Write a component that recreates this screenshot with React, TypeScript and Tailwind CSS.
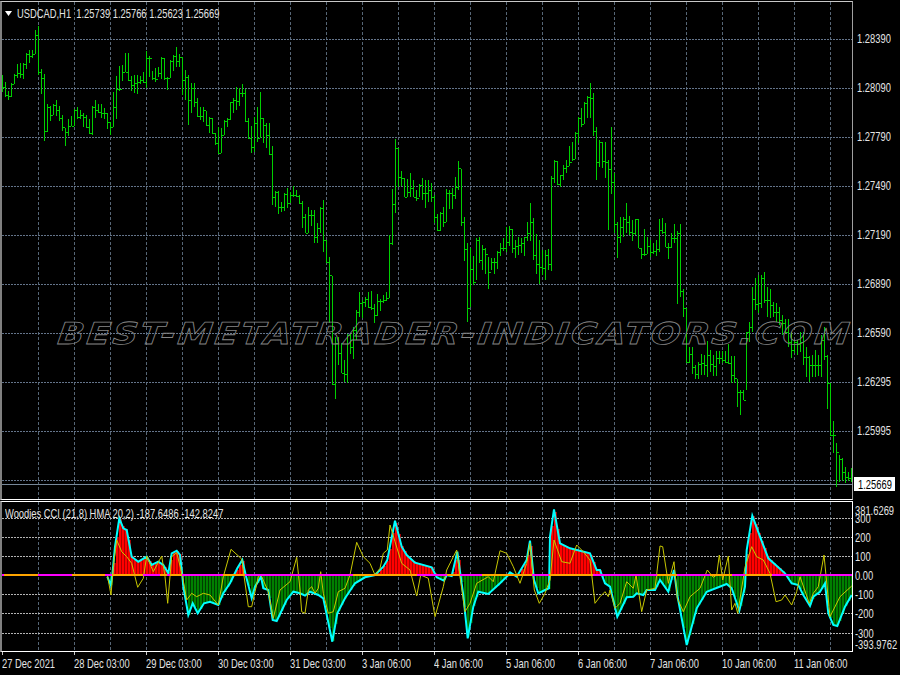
import React from 'react'

// [high, low, close] of each H1 bar as screen rows, one bar every 3px
const bars: number[][] = [
  [75,92,87],[82,97,95],[91,100,96],[83,97,84],[74,84,75],[64,78,73],[63,78,74],[63,79,64],[53,69,54],[50,63,56],
  [50,58,54],[30,54,35],[26,75,72],[69,94,78],[74,141,131],[104,132,107],[106,121,115],[104,115,105],[100,116,110],[106,121,118],
  [115,131,127],[128,146,132],[119,136,126],[116,126,126],[109,126,110],[107,119,117],[110,119,115],[113,127,117],[115,128,127],[119,134,133],
  [106,135,107],[100,118,110],[104,113,112],[104,118,113],[108,119,113],[113,129,122],[122,135,127],[92,127,107],[76,119,89],[66,91,89],
  [65,81,72],[53,72,72],[53,81,80],[76,91,85],[75,93,83],[75,94,82],[76,84,80],[72,83,82],[51,88,58],[56,77,58],
  [71,80,78],[68,82,79],[67,77,73],[57,79,58],[58,80,78],[77,90,78],[60,78,61],[55,71,56],[47,67,61],[54,67,57],
  [57,95,80],[70,100,77],[75,125,100],[83,113,88],[83,107,102],[98,117,116],[107,120,116],[107,122,110],[111,126,125],[117,133,118],
  [118,134,133],[133,145,143],[127,154,153],[128,153,135],[120,135,121],[118,127,119],[102,120,102],[98,113,100],[87,110,101],[88,106,93],
  [84,97,93],[89,122,121],[118,139,138],[126,153,147],[117,152,123],[107,142,138],[92,138,118],[118,143,125],[123,148,135],[123,155,154],
  [146,205,197],[191,207,192],[191,214,207],[202,212,207],[193,211,194],[188,208,203],[192,203,195],[186,197,195],[190,197,196],[195,204,203],
  [201,228,217],[214,233,233],[207,233,215],[210,226,215],[210,243,237],[223,243,228],[207,233,208],[200,252,240],[240,263,262],[257,323,275],
  [276,385,384],[337,399,343],[337,365,353],[343,373,373],[360,382,374],[334,383,335],[334,354,347],[327,359,330],[310,340,312],[292,317,303],
  [300,318,302],[297,307,299],[292,308,307],[291,310,308],[304,323,315],[294,316,301],[299,311,301],[295,303,300],[292,301,298],[235,298,243],
  [189,245,204],[139,213,148],[148,187,177],[171,186,178],[178,197,197],[179,197,192],[173,197,188],[180,197,197],[190,201,198],[184,197,185],
  [178,200,193],[180,208,193],[180,202,190],[183,202,197],[195,223,217],[214,231,230],[212,231,213],[207,227,222],[189,222,193],[190,209,193],
  [188,209,195],[177,199,187],[161,190,168],[169,226,222],[217,261,249],[243,322,308],[248,307,269],[256,285,282],[238,280,240],[237,263,260],
  [245,270,249],[248,274,254],[257,289,272],[258,270,262],[258,274,262],[251,269,252],[243,256,248],[238,251,248],[227,252,242],[226,246,229],
  [229,253,248],[240,258,246],[237,255,245],[238,253,243],[237,256,237],[222,241,233],[203,241,222],[218,260,255],[234,274,264],[240,284,267],
  [250,275,268],[250,280,255],[249,270,264],[176,271,178],[160,183,161],[161,185,184],[175,187,175],[165,180,168],[160,173,166],[146,166,162],
  [142,161,159],[132,159,133],[117,143,118],[108,127,124],[102,124,103],[96,118,97],[83,118,98],[93,136,131],[127,180,162],[140,167,142],
  [142,168,161],[142,178,162],[160,230,169],[127,194,182],[173,233,224],[222,258,237],[217,243,227],[217,237,219],[203,233,222],[216,235,232],
  [220,241,233],[219,235,219],[219,248,248],[248,259,254],[229,256,254],[237,254,246],[240,257,252],[243,254,251],[240,256,249],[219,252,230],
  [218,234,232],[223,247,247],[243,259,247],[233,248,238],[224,243,238],[231,304,233],[224,297,291],[289,317,308],[308,363,362],[347,363,354],
  [347,374,367],[365,379,374],[362,379,364],[354,375,363],[355,375,365],[341,377,355],[350,372,364],[355,376,366],[351,376,358],[351,364,358],
  [351,363,360],[351,363,362],[344,364,363],[356,383,375],[356,383,378],[379,407,392],[390,415,392],[390,400,400],[332,390,332],[322,342,327],
  [287,332,299],[278,310,304],[275,313,303],[275,308,278],[272,303,300],[287,317,300],[289,318,305],[302,317,312],[303,322,312],[307,325,320],
  [315,335,323],[319,333,332],[319,347,342],[332,358,350],[340,353,342],[340,355,344],[332,352,342],[332,365,357],[347,377,357],[356,382,365],
  [355,377,365],[350,377,365],[355,376,365],[335,377,340],[327,360,356],[355,409,383],[383,436,435],[421,453,435],[443,487,452],[455,482,459],
  [458,481,472],[467,483,477],[472,481,478],[468,482,479],
]

const barPath = bars
  .map((b, i) => {
    const col = 2 + 3 * i
    const open = i === 0 ? b[2] : bars[i - 1][2]
    return `M${col} ${b[0]}h1v${b[1] - b[0]}h-1zM${col + 1} ${b[2]}h1v1h-1zM${col - 1} ${open}h1v1h-1z`
  })
  .join('')

// traced from the sub-window, [x, y] in 3x crop units per block
const trace = (base: number, p: number[]) => {
  const out: number[][] = []
  for (let i = 0; i < p.length; i += 2) out.push([base + p[i] / 3, 480 + p[i + 1] / 3])
  return out
}

const cci = [
  ...trace(0, [322,290,332,315,337,285,345,200,358,115,370,145,380,150,395,230,415,245,440,230,455,255,475,245,490,255,505,280,515,220,530,212,540,225,547,285,550,320,565,405,578,370,593,400,612,370,630,365,655,375,670,340,690,310,712,265,727,240,737,285,755,355,765,320,783,290,790,325,805,330,818,420,830,423,860,360,880,335]),
  ...trace(300, [0,340,15,347,30,335,55,345,70,355,97,485,112,400,135,355,165,310,195,292,225,285,250,260,262,240,285,122,305,200,320,225,345,248,395,262,410,292,432,302,440,285,455,288,472,215,482,290,490,345,503,475,520,380,535,335,565,342,600,310,620,290,630,277,650,290,680,240,690,182,702,300,715,340,735,330,747,325,750,170,762,88,780,190,810,205,870,220,890,270]),
  ...trace(600, [0,270,15,310,30,320,52,410,80,352,100,350,110,340,130,345,140,330,165,330,180,300,205,335,222,270,232,345,260,495,290,385,320,335,380,312,395,325,418,392,435,320,440,210,457,107,480,170,505,235,555,280,575,310,595,315,610,345,630,378,640,350,660,335,675,310,685,400,700,435,712,438,735,380,755,345]),
]

const hma = [
  ...trace(0, [322,285,333,345,340,260,350,180,365,215,380,230,395,250,405,290,413,322,430,295,440,228,460,275,485,228,495,290,503,370,515,230,530,218,547,285,560,360,575,340,590,350,610,340,630,345,655,375,670,290,693,208,725,237,745,380,755,380,775,290,783,285,805,335,820,415,840,330,870,305,890,232]),
  ...trace(300, [0,330,5,395,15,400,25,330,35,320,45,340,55,325,62,275,70,340,85,400,100,395,115,335,135,325,150,285,170,187,190,230,210,250,225,285,240,265,250,220,262,210,270,135,285,185,305,250,330,270,350,348,362,285,385,295,405,410,430,320,440,270,470,210,480,290,495,395,510,370,530,310,565,290,580,305,600,212,620,220,640,260,660,310,680,250,690,190,703,330,718,370,735,340,750,300,762,180,785,245,810,250,830,195,850,215,870,240,885,370]),
  ...trace(600, [0,350,15,335,25,350,30,330,45,385,60,370,80,305,100,325,108,285,125,395,140,330,165,325,180,198,188,200,205,310,222,245,232,355,250,395,270,350,300,325,322,270,340,292,350,285,358,225,368,300,385,228,395,390,405,370,413,400,435,262,455,200,470,230,490,240,510,280,528,365,545,360,555,345,575,375,590,335,600,290,628,370,640,340,655,320,672,225,690,410,720,350,755,318]),
]

const poly = (p: number[][]) => p.map((q) => `${q[0].toFixed(1)},${q[1].toFixed(1)}`).join(' ')
const zero = 575

const cciAt = (x: number) => {
  for (let i = 1; i < cci.length; i++) {
    if (x <= cci[i][0]) {
      const [x0, y0] = cci[i - 1]
      const [x1, y1] = cci[i]
      return y0 + ((y1 - y0) * (x - x0)) / Math.max(x1 - x0, 0.01)
    }
  }
  return zero
}

const histogram = bars.map((_, i) => 2 + 3 * i).filter((x) => x >= 108)

// colour runs of the zero line
const zeroRuns: [number, number, string][] = [
  [2, 4, '#ff00ff'],[4, 38, '#ffa500'],[38, 72, '#ff00ff'],[72, 105, '#ffa500'],[105, 112, '#ff00ff'],[112, 143, '#ffa500'],
  [143, 160, '#ff00ff'],[160, 167, '#ffa500'],[167, 170, '#ff00ff'],[170, 182, '#ffa500'],[182, 223, '#ff00ff'],[223, 245, '#ffa500'],
  [245, 353, '#ff00ff'],[353, 417, '#ffa500'],[417, 447, '#ff00ff'],[447, 460, '#ffa500'],[460, 482, '#ff00ff'],[482, 532, '#ffa500'],
  [532, 549, '#ff00ff'],[549, 593, '#ffa500'],[593, 657, '#ff00ff'],[657, 677, '#ffa500'],[677, 710, '#ff00ff'],[710, 732, '#ffa500'],
  [732, 745, '#ff00ff'],[745, 772, '#ffa500'],[772, 852, '#ff00ff'],
]

const gridX = Array.from({ length: 23 }, (_, i) => 38 + 36 * i)
const gridY = [39, 88, 137, 186, 235, 284, 333, 382, 431, 480]
const levelY = [518, 537, 556, 594, 613, 633]

const prices = ['1.28390', '1.28090', '1.27790', '1.27490', '1.27190', '1.26890', '1.26590', '1.26295', '1.25995']
const levels: [string, string][] = [
  ['381.6269', 'h-[10px]'],['300', '-mt-[6px] h-[19px]'],['200', 'h-[19px]'],['100', 'h-[19px]'],['0.00', 'h-[19px]'],
  ['-100', 'h-[19px]'],['-200', 'h-[19px]'],['-300', 'h-[20px]'],['-393.9762', '-mt-[4px] h-[11px]'],
]
const dates = ['27 Dec 2021', '28 Dec 03:00', '29 Dec 03:00', '30 Dec 03:00', '31 Dec 03:00', '3 Jan 06:00', '4 Jan 06:00', '5 Jan 06:00', '6 Jan 06:00', '7 Jan 06:00', '10 Jan 06:00', '11 Jan 06:00']

// the terminal font is narrower than Arial
const narrow = 'origin-left scale-x-[.72] whitespace-nowrap'

const GridV = ({ y1, y2 }: { y1: number; y2: number }) => (
  <>
    {gridX.map((x) => (
      <line key={x} x1={x + 0.5} x2={x + 0.5} y1={y1} y2={y2} stroke="#566676" strokeDasharray="3 2" />
    ))}
  </>
)

const App: React.FC = () => {
  return (
    <div className="relative flex h-[675px] w-[900px] flex-col overflow-hidden bg-black pt-px font-['Liberation_Sans',sans-serif] text-[13px] leading-none text-[#e4e4e4]">
      <div className="flex h-[499px]">
        <div className="relative h-[499px] w-[853px] border-t border-r border-b border-l-2 border-t-[#c8c8c8] border-r-[#a0a0a0] border-b-white border-l-[#808080]">
          <svg viewBox="2 2 850 497" width={850} height={497} className="block" shapeRendering="crispEdges">
            <GridV y1={2} y2={499} />
            {gridY.map((y) => (
              <line key={y} x1={2} x2={852} y1={y + 0.5} y2={y + 0.5} stroke="#64748a" strokeDasharray="2 1" />
            ))}
            <rect x={2} y={484} width={850} height={1} fill="#778899" />
            <path d={barPath} fill="#00d000" />
          </svg>
          <div className="absolute top-[5px] left-[3px] flex items-center gap-[5px]">
            <svg width={7} height={5} viewBox="0 0 7 5" className="block">
              <path d="M0 0h7L3.5 5z" fill="#fff" />
            </svg>
            <span className={narrow}>USDCAD,H1&nbsp; 1.25739 1.25766 1.25623 1.25669</span>
          </div>
          <div className="absolute top-[317px] left-[56px] origin-left -skew-x-6 scale-x-[1.16] whitespace-nowrap font-['DejaVu_Sans',sans-serif] text-[30px] font-bold italic tracking-[2px] text-transparent [-webkit-text-stroke:0.8px_#858585]">
            BEST-METATRADER-INDICATORS.COM
          </div>
        </div>
        <div className="flex flex-col pt-[13px] pl-[4px]">
          {prices.map((p) => (
            <div key={p} className="flex h-[49px] items-center">
              <span className={narrow}>{p}</span>
            </div>
          ))}
          <div className="mt-[22px] -ml-[3px] flex h-[14px] w-[41px] items-center bg-white pl-[4px] text-black">
            <span className={narrow}>1.25669</span>
          </div>
        </div>
      </div>
      <div className="mt-px flex h-[151px]">
        <div className="relative h-[151px] w-[853px] border-t border-r border-b border-l-2 border-t-white border-r-white border-b-white border-l-[#808080]">
          <svg viewBox="2 502 850 149" width={850} height={149} className="block">
            <g shapeRendering="crispEdges">
              <GridV y1={502} y2={651} />
              {levelY.map((y) => (
                <line key={y} x1={2} x2={852} y1={y + 0.5} y2={y + 0.5} stroke="#b4b4b4" strokeDasharray="2 1" />
              ))}
              {histogram.map((x) => {
                const y = cciAt(x + 0.5)
                const up = y < zero
                return (
                  <g key={x}>
                    <rect x={x} y={Math.min(y, zero)} width={3} height={Math.abs(y - zero)} fill={up ? '#a80000' : '#003c00'} />
                    <rect x={x} y={Math.min(y, zero)} width={2} height={Math.abs(y - zero)} fill={up ? '#ff0000' : '#008000'} />
                  </g>
                )
              })}
            </g>
            <polyline points={poly(cci)} fill="none" stroke="#00ffff" strokeWidth={2} />
            <polyline points={poly(hma)} fill="none" stroke="#c8c800" strokeWidth={1} />
            <g shapeRendering="crispEdges">
              {zeroRuns.map(([a, b, c]) => (
                <rect key={a} x={a} y={574} width={b - a} height={2} fill={c} />
              ))}
            </g>
          </svg>
          <div className={`absolute top-[5px] left-[3px] ${narrow}`}>Woodies CCI (21,8) HMA 20,2) -187.6486 -142.8247</div>
        </div>
        <div className="flex flex-col pt-[4px] pl-[2px]">
          {levels.map(([t, h]) => (
            <div key={t} className={`flex items-center ${h}`}>
              <span className={narrow}>{t}</span>
            </div>
          ))}
        </div>
      </div>
      <div className="flex pl-[2px]">
        {dates.map((d) => (
          <div key={d} className="h-[23px] w-[72px] shrink-0">
            <div className="h-[3px] w-px bg-[#c8c8c8]" />
            <div className={`pt-[2px] ${narrow}`}>{d}</div>
          </div>
        ))}
      </div>
    </div>
  )
}

export default App
